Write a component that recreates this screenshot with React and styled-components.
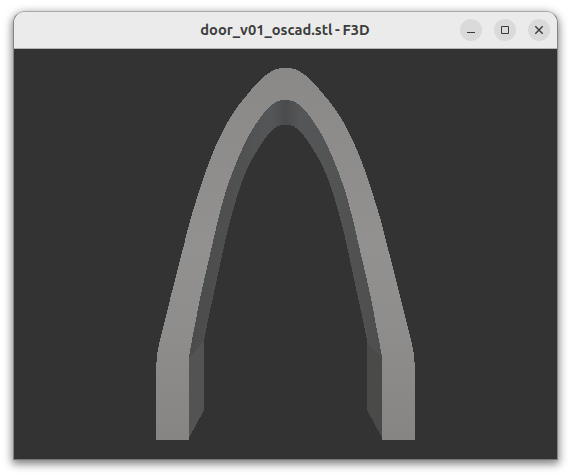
import React from "react";
import styled, { createGlobalStyle } from "styled-components";

const GlobalStyle = createGlobalStyle`
  body { margin: 0; background: #fff; overflow: hidden; }
  * { box-sizing: border-box; }
`;

const Desktop = styled.main`
  height: 476px;
  padding: 11px 13px 16px;
`;

const Window = styled.section`
  display: flex;
  flex-direction: column;
  width: 545px;
  height: 449px;
  border: 1px solid #a9aaa9;
  border-color: #a9aaa9 #858585 #777 #858585;
  border-radius: 12px 12px 0 0;
  overflow: hidden;
  background: #ebebeb;
  box-shadow: 0 3px 9px 1px rgba(0, 0, 0, 0.5);
`;

const TitleBar = styled.header`
  display: grid;
  grid-template-columns: 1fr auto 1fr;
  align-items: center;
  flex: 0 0 37px;
  border-bottom: 1px solid #b3b6b3;
  background: #ebebeb;
`;

const Title = styled.h1`
  grid-column: 2;
  margin: 0;
  padding-right: 1px;
  font: 700 14.67px/20px Ubuntu, "Noto Sans", sans-serif;
  word-spacing: -0.9px;
  letter-spacing: 0.01px;
  color: #3d3d3d;
  white-space: nowrap;
`;

const Controls = styled.div`
  display: flex;
  justify-content: flex-end;
  gap: 12px;
  padding-right: 7px;
`;

const ControlButton = styled.button`
  width: 22px;
  height: 22px;
  padding: 0;
  border: 0;
  border-radius: 50%;
  background: #dadada;
  svg { display: block; }
`;

const Viewport = styled.div`
  flex: 1;
  background: #333;
  svg { display: block; }
`;

// Left half of each contour, from the foot up to the crown.
const outer = [[156, 440], [156, 370], [157, 354], [160, 340], [165, 320], [172.4, 290], [183.4, 247], [190, 221], [197.3, 197], [206.3, 170], [214.4, 149], [223.3, 130], [235, 110.3], [250, 91.3], [258, 82.3], [265, 75.7], [273, 70.5], [279, 68.5], [285.5, 68.3]];
const inner = [[189, 440], [189, 357], [192, 340], [196, 320], [200.3, 297], [212.7, 243], [218.3, 219], [225, 194], [231.5, 175], [238.7, 157], [246.7, 139.5], [255.5, 124.5], [264, 112.7], [272.5, 104.3], [279, 100.8], [285.5, 100.5]];
const rear = [[189, 438], [204, 410], [204, 341], [208, 320], [213.3, 296], [221.7, 257], [228, 229], [236, 200], [242, 181.5], [250, 163], [260, 146], [270, 132.3], [278, 126], [285.5, 124.8]];

const mirror = (points) => points.slice(0, -1).map(([x, y]) => [571 - x, y]).reverse();
const arch = (points) => [...points, ...mirror(points)];

// Straight feet, with a Catmull-Rom spline through the curved part.
const contour = (points) =>
  points.slice(1).map((end, i) => {
    const start = points[i];
    if (start[1] > 350 || end[1] > 350) return `L${end.join(" ")}`;
    const before = points[i - 1];
    const after = points[i + 2];
    const a = [0, 1].map((k) => start[k] + (before[1] > 400 ? 0 : (end[k] - before[k]) / 6));
    const b = [0, 1].map((k) => end[k] - (after[1] > 400 ? 0 : (after[k] - start[k]) / 6));
    return `C${a.join(" ")} ${b.join(" ")} ${end.join(" ")}`;
  }).join("");

const path = (a, b) => {
  const front = arch(a);
  const back = arch(b).reverse();
  return `M${front[0].join(" ")}${contour(front)}L${back[0].join(" ")}${contour(back)}Z`;
};

function ArchModel() {
  return (
    <svg width="543" height="410" viewBox="14 49 543 410" shapeRendering="crispEdges" aria-label="Arch door frame">
      <defs>
        <linearGradient id="face" gradientUnits="userSpaceOnUse" x1="0" y1="68" x2="0" y2="440">
          <stop offset="0" stopColor="#8a8987" />
          <stop offset=".48" stopColor="#929190" />
          <stop offset=".72" stopColor="#8e8d8b" />
          <stop offset="1" stopColor="#868583" />
        </linearGradient>
        <linearGradient id="reveal" gradientUnits="userSpaceOnUse" x1="189" y1="0" x2="382" y2="0">
          <stop offset="0" stopColor="#4b4b4b" />
          <stop offset=".28" stopColor="#505151" />
          <stop offset=".42" stopColor="#555658" />
          <stop offset=".5" stopColor="#4a4b4c" />
          <stop offset=".58" stopColor="#555658" />
          <stop offset=".72" stopColor="#535454" />
          <stop offset="1" stopColor="#4e4e4e" />
        </linearGradient>
      </defs>
      <path d={path(inner, rear)} fill="url(#reveal)" />
      <path d="M189 358L204 341V410L189 438Z" fill="#535351" />
      <path d="M382 358L367 343V410L382 438Z" fill="#4a4a49" />
      <path d={path(outer, inner)} fill="url(#face)" />
    </svg>
  );
}

const Glyph = ({ d }) => (
  <svg width="22" height="22" fill="none" stroke="#3b3b3b">
    <path d={d} />
  </svg>
);

const CloseGlyph = () => (
  <svg width="22" height="22" fill="none" stroke="#3b3b3b" strokeWidth="1.4">
    <path d="M7.3 7.3L14.7 14.7M14.7 7.3L7.3 14.7" />
  </svg>
);

export default function App() {
  return (
    <>
      <GlobalStyle />
      <Desktop>
        <Window>
          <TitleBar>
            <Title>door_v01_oscad.stl - F3D</Title>
            <Controls>
              <ControlButton aria-label="Minimize"><Glyph d="M7 13.5H15" /></ControlButton>
              <ControlButton aria-label="Maximize"><Glyph d="M7.5 7.5H14.5V14.5H7.5Z" /></ControlButton>
              <ControlButton aria-label="Close"><CloseGlyph /></ControlButton>
            </Controls>
          </TitleBar>
          <Viewport><ArchModel /></Viewport>
        </Window>
      </Desktop>
    </>
  );
}
